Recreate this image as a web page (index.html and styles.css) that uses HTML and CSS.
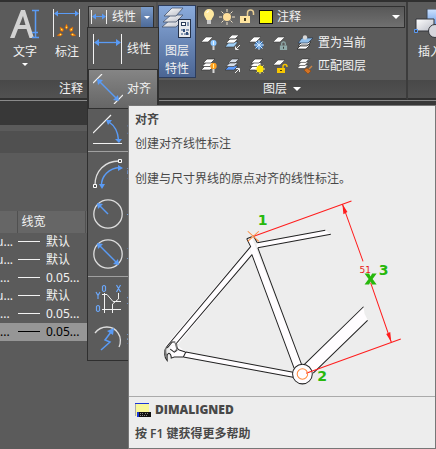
FILE: index.html
```html
<!DOCTYPE html>
<html lang="zh-CN">
<head>
<meta charset="utf-8">
<title>标注 - 对齐</title>
<link rel="stylesheet" href="styles.css">
</head>
<body>
<svg class="defs" aria-hidden="true">
  <defs>
    <linearGradient id="steel" x1="0" y1="0" x2="1" y2="1"><stop offset="0" stop-color="#fff"/><stop offset="1" stop-color="#b9bcc6"/></linearGradient>
    <linearGradient id="glass" x1="0" y1="0" x2="0" y2="1"><stop offset="0" stop-color="#cfe3ff"/><stop offset="1" stop-color="#6c9fe6"/></linearGradient>
    <symbol id="sheet" viewBox="0 0 16 16"><path d="M0 7L5 2h7L7 7z" fill="#fff" stroke="#3d3d3d" stroke-width=".6"/></symbol>
    <symbol id="stack" viewBox="0 0 16 16"><g fill="#fff" stroke="#333" stroke-width=".7"><path d="M0 12l4-4h9l-4 4z"/><path d="M1 8.500l4-4h8l-4 4z"/><path d="M2 5l4-4h8l-4 4z"/></g></symbol>
    <symbol id="padlock" viewBox="0 0 10 10"><path d="M3 5V3a2 2 0 0 1 4 0v2" fill="none" stroke="currentColor" stroke-width="1.400"/><path d="M1 5h8v5H1z" fill="currentColor"/><path d="M4.500 6.500h1v2h-1z" fill="#333"/></symbol>
  </defs>
</svg>

<header class="ribbon">
  <section class="panel panel-annotate">
    <div class="panel-body">
      <button class="big" type="button">
        <svg width="30" height="30" viewBox="0 0 30 30"><path d="M0 29L11 1h4l9 28h-4.500l-3-9H8l-3.500 9zM9.500 16h6L13 7z" fill="#d2d2d2"/><path d="M22 1.500h7M22 28.500h7M25.500 2v26M22 23.500h6" stroke="#5a9bf5" fill="none" stroke-width="1.500"/></svg>
        <span>文字</span><i class="caret"></i>
      </button>
      <button class="big" type="button">
        <svg width="28" height="30" viewBox="0 0 28 30"><path d="M.5 0v28M26.500 0v28" stroke="#eee"/><path d="M3 4.500h21" stroke="#5a9bf5"/><path d="M1 4.500l4-3v6zM26 4.500l-4-3v6z" fill="#5a9bf5"/><g fill="#ff9d13" stroke="#c95a0c" stroke-width=".5"><path d="M13.500 15l1.500 3.500-1.500 2-1.500-2zM7 18l3.500 2-.5 2.500-2.500-.5zM20 18l-3.500 2 .5 2.500 2.500-.5zM4 26.500l3.500-2.500 2 1.500-2 1.500zM23 26.500l-3.500-2.500-2 1.500 2 1.500z"/></g><path d="M13 18h1v1h-1zM8 20h1v1H8zM18 20h1v1h-1zM7 25h1v1H7zM19 25h1v1h-1z" fill="#ffec68"/></svg>
        <span>标注</span>
      </button>
      <div class="split">
        <button class="split-main" type="button">
          <svg width="17" height="16" viewBox="0 0 17 16"><path d="M.5 1v14M15.500 1v14" stroke="#eee"/><path d="M3 7.500h10" stroke="#5a9bf5"/><path d="M1 7.500l4-3v6zM15 7.500l-4-3v6z" fill="#5a9bf5"/></svg>
          <span>线性</span>
        </button>
        <button class="split-drop" type="button" aria-label="标注类型"><i class="caret small"></i></button>
      </div>
    </div>
    <h2 class="panel-title">注释<i class="caret wide"></i></h2>
  </section>

  <section class="panel panel-layers">
    <div class="panel-body">
      <button class="props" type="button">
        <svg width="32" height="34" viewBox="0 0 32 34"><g fill="url(#steel)" stroke="#47556e" stroke-width=".8"><path d="M1 21l8-7h13l-7 7z"/><path d="M2 16l8-7h12l-7 7z"/><path d="M3 10l8-8h11l-7 8z"/></g><rect x="17.500" y="13.500" width="12" height="18" fill="#e9ebee" stroke="#25324a"/><path d="M20 16h5v4h-5z" fill="#2b3d59"/><path d="M21 17h3v2h-3z" fill="#fff"/><path d="M26 17h2M26 19h2M20 24h2M20 28h2M25 24h3M23 28h5" stroke="#2b4a78"/><path d="M22 23h2v3h-2zM25 26h2v3h-2z" fill="#33507c"/></svg>
        <span>图层</span><span>特性</span>
      </button>
      <div class="layer-tools">
        <div class="layer-combo">
          <svg width="12" height="16" viewBox="0 0 12 16"><path d="M3.500 11C3 8.500 1 8 1 5a5 5 0 0 1 10 0c0 3-2 3.500-2.500 6z" fill="#ffe9a0"/><path d="M4 11h4v4H4z" fill="#c8c8c8"/><path d="M4 4a2 2 0 0 1 2-2" stroke="#fff" fill="none"/></svg>
          <svg width="16" height="16" viewBox="0 0 16 16"><circle cx="8" cy="8" r="4" fill="#ffdf9b"/><path d="M8 0v3M8 13v3M0 8h3M13 8h3M2.500 2.500l2 2M11.500 11.500l2 2M2.500 13.500l2-2M11.500 4.500l2-2" stroke="#eee1c8"/></svg>
          <svg width="16" height="16" viewBox="0 0 16 16"><path d="M8.500 7V4a2.500 2.500 0 0 1 6 0v2" fill="none" stroke="#e9cf94" stroke-width="1.500"/><path d="M1 7h10v7H1z" fill="#ffe5a0"/><path d="M5 9h2v3H5z" fill="#4b4020"/></svg>
          <i class="swatch"></i>
          <select aria-label="图层"><option>注释</option></select>
          <i class="caret wide"></i>
        </div>
        <div class="tool-row">
          <button type="button" aria-label="关闭图层"><svg width="16" height="16" viewBox="0 0 16 16"><use href="#sheet" width="16" height="16"/><circle cx="12.500" cy="8" r="3" fill="#8fc8ff"/><path d="M12.500 6v4" stroke="#eaf5ff"/><path d="M11.500 11h2v4h-2z" fill="#d0d0d0"/></svg></button>
          <button type="button" aria-label="隔离图层"><svg width="16" height="16" viewBox="0 0 16 16"><path d="M0 12l4-5h9l-4 5z" fill="#9fcff8" stroke="#333" stroke-width=".6"/><path d="M1 8l4-4h8L9 8zM3 4l4-4h7l-4 4z" fill="#fff" stroke="#333" stroke-width=".6"/><path d="M15 10l-4 4M10.500 11.500v3h3" stroke="#eee" fill="none"/></svg></button>
          <button type="button" aria-label="冻结图层"><svg width="16" height="16" viewBox="0 0 16 16"><use href="#sheet" width="16" height="16"/><circle cx="10" cy="10" r="4" fill="#3f7dc4"/><path d="M10 5v10M5 10h10M6.500 6.500l7 7M13.500 6.500l-7 7" stroke="#cfe8ff"/></svg></button>
          <button type="button" aria-label="锁定图层"><svg width="16" height="16" viewBox="0 0 16 16"><use href="#sheet" width="16" height="16"/><use href="#padlock" x="6" y="6" width="9" height="9" color="#8faaa9"/></svg></button>
          <button class="labelled" type="button"><svg width="16" height="16" viewBox="0 0 16 16"><path d="M0 14l4-4h9l-4 4zM1 11l4-4h9l-4 4z" fill="#fff" stroke="#222" stroke-width=".7"/><path d="M1 8l4-5h11l-5 5z" fill="#91bfea" stroke="#26384e" stroke-width=".7"/><circle cx="8" cy="2.500" r="2.200" fill="#d8d8d8"/></svg><span>置为当前</span></button>
        </div>
        <div class="tool-row">
          <button type="button" aria-label="打开所有图层"><svg width="16" height="16" viewBox="0 0 16 16"><use href="#stack" width="16" height="16"/><circle cx="12.500" cy="8" r="3.200" fill="#ff9f20"/><path d="M12.500 6v4" stroke="#fff29a"/><path d="M11.500 11h2v4h-2z" fill="#d8d8d8"/></svg></button>
          <button type="button" aria-label="取消隔离"><svg width="16" height="16" viewBox="0 0 16 16"><path d="M0 12l4-4h9l-4 4z" fill="#5b9bff" stroke="#333" stroke-width=".6"/><path d="M1 8.500l4-4h8l-4 4zM3 5l4-4h7l-4 4z" fill="#d7dee9" stroke="#333" stroke-width=".6"/><path d="M10 15l4-4M11 10.500h3.500v3.500" stroke="#eee" fill="none"/></svg></button>
          <button type="button" aria-label="解冻图层"><svg width="16" height="16" viewBox="0 0 16 16"><use href="#stack" width="16" height="16"/><path d="M11 6v10M6 11h10M7.500 7.500l7 7M14.500 7.500l-7 7" stroke="#fff08a"/><circle cx="11" cy="11" r="3.500" fill="#ffe600"/></svg></button>
          <button type="button" aria-label="解锁图层"><svg width="16" height="16" viewBox="0 0 16 16"><use href="#sheet" width="16" height="16"/><path d="M10 11V8.500a2 2 0 0 1 4 0V9" stroke="#f7c600" stroke-width="1.400" fill="none"/><path d="M4 10h8v5H4z" fill="#f7c600"/><path d="M7 12h2v1H7z" fill="#4a3a00"/></svg></button>
          <button class="labelled" type="button"><svg width="16" height="16" viewBox="0 0 16 16"><use href="#stack" width="14" height="14"/><path d="M7 12l3-2 4 3-3 3z" fill="#d27325" stroke="#8d430c" stroke-width=".6"/><path d="M12 11l3-3" stroke="#c98346" stroke-width="1.500"/></svg><span>匹配图层</span></button>
        </div>
      </div>
    </div>
    <h2 class="panel-title">图层<i class="caret wide"></i></h2>
  </section>

  <section class="panel panel-insert">
    <div class="panel-body">
      <button class="big insert" type="button">
        <svg width="32" height="30" viewBox="0 0 32 30"><path d="M13 0h18v16H13z" fill="url(#glass)" stroke="#3d4654"/><path d="M2 10h18v12H2z" fill="url(#steel)" stroke="#34373d"/><circle cx="21" cy="22" r="6.500" fill="#d6d6dc" stroke="#34373d"/><path d="M.5 20.500h3v3h-3z" fill="#444" stroke="#5a9bf5"/></svg>
        <span>插入</span>
      </button>
    </div>
    <h2 class="panel-title"></h2>
  </section>
</header>

<main class="palette">
  <div class="band"></div>
  <div class="toolbar"></div>
  <table class="layers">
    <thead><tr><th></th><th>线宽</th><th></th></tr></thead>
    <tbody>
      <tr><td class="named">u...</td><td><i class="weight"></i>默认</td><td></td></tr>
      <tr><td class="named">u...</td><td><i class="weight"></i>默认</td><td></td></tr>
      <tr><td>...</td><td><i class="weight"></i>0.05...</td><td></td></tr>
      <tr><td class="named">u...</td><td><i class="weight"></i>默认</td><td></td></tr>
      <tr><td>...</td><td><i class="weight"></i>0.05...</td><td></td></tr>
      <tr class="selected"><td>...</td><td><i class="weight"></i>0.05...</td><td></td></tr>
    </tbody>
  </table>
</main>

<nav class="menu" aria-label="标注类型">
  <button type="button"><svg width="30" height="30" viewBox="0 0 30 30"><path d="M.5 0v30M28.500 0v30" stroke="#f2f2f2"/><path d="M3 8.500h23" stroke="#5a9bf5" stroke-width="1.300"/><path d="M1 8.500l5-3.500v7zM28 8.500L23 5v7z" fill="#5a9bf5"/></svg><span>线性</span></button>
  <button type="button" class="active"><svg width="30" height="30" viewBox="0 0 30 30"><path d="M0 9l9-9M21 30l9-9" stroke="#f2f2f2" stroke-width="1.200"/><path d="M6 7l18 18" stroke="#5a9bf5" stroke-width="1.500"/><path d="M4 5l6 1-5 5zM26 27l-1-6-5 5z" fill="#5a9bf5"/></svg><span>对齐</span></button>
  <button type="button"><svg width="30" height="30" viewBox="0 0 30 30"><path d="M0 19L18 1M0 29.500h29" stroke="#f2f2f2" stroke-width="1.200"/><path d="M16 8c6 4 9 9 9.500 18" stroke="#5a9bf5" stroke-width="1.500" fill="none"/><path d="M13 6l6 0-4 5zM22 25h7l-3 4z" fill="#5a9bf5"/></svg><span>角度</span></button>
  <hr>
  <button type="button"><svg width="30" height="30" viewBox="0 0 30 30"><path d="M2 26C2 12 12 2 26 2" stroke="#dedede" stroke-width="1.300" fill="none"/><path d="M8.500 27C8 17 16 9 27 8.500" stroke="#5a9bf5" stroke-width="1.500" fill="none"/><path d="M6 25h6l-3 5zM25 6v6l5-3z" fill="#5a9bf5"/><path d="M.5 25.500h3v3h-3zM25.500.5h3v3h-3z" fill="#555" stroke="#fff"/></svg><span>弧长</span></button>
  <button type="button"><svg width="30" height="30" viewBox="0 0 30 30"><circle cx="15" cy="15" r="14.200" fill="none" stroke="#dedede" stroke-width="1.300"/><path d="M15 15L7 7" stroke="#5a9bf5" stroke-width="1.500"/><path d="M4 4l6 1-5 5z" fill="#5a9bf5"/></svg><span>半径</span></button>
  <button type="button"><svg width="30" height="30" viewBox="0 0 30 30"><circle cx="15" cy="15" r="14.200" fill="none" stroke="#dedede" stroke-width="1.300"/><path d="M7 7l16 16" stroke="#5a9bf5" stroke-width="1.500"/><path d="M4 4l6 1-5 5zM26 26l-1-6-5 5z" fill="#5a9bf5"/></svg><span>直径</span></button>
  <hr>
  <button type="button"><svg width="30" height="30" viewBox="0 0 30 30"><path d="M11.500 9v20M9 10.500h5l6 7h8M9 25.500h19M19.500 29v-9l6-5V9" stroke="#f2f2f2" fill="none"/><path d="M9.500 2.500q1.500-2 3 0v4q-1.500 2-3 0zM23.500 1l4 7M27.500 1l-4 7M3 8l2 3.500L7 8M5 11.500V15M3.500 22.500q1.500-2 3 0v4q-1.500 2-3 0z" stroke="#6ba6f7" stroke-width="1.200" fill="none"/></svg><span>坐标</span></button>
  <button type="button"><svg width="30" height="30" viewBox="0 0 30 30"><path d="M2 9C8 1 20 1 25 9c3 4 3 10 1 14" stroke="#dedede" stroke-width="1.300" fill="none"/><path d="M8 26l9-8-5-2 6-8" stroke="#5a9bf5" stroke-width="1.500" fill="none"/><path d="M21 4l-7 3 6 4z" fill="#5a9bf5"/></svg><span>折弯</span></button>
</nav>

<aside class="tooltip" role="tooltip">
  <div class="tip-main">
    <h3>对齐</h3>
    <p class="summary">创建对齐线性标注</p>
    <p class="detail">创建与尺寸界线的原点对齐的线性标注。</p>
    <svg class="figure" viewBox="136 194 292 196" role="img" aria-label="自行车车架标注示例">
      <g fill="#fffdff">
        <path d="M257 243l68-13 5 4-73 14zM250 246l-84 99 12-1 74-89zM186 351l107 20v5l-109-20zM304 364l59-58 1 7 3 6-54 53zM248 240l4-3 50 127-8 3-43-114z"/>
        <path d="M171 345l7-1 8 7-2 5-12 1z"/>
        <circle cx="302.300" cy="372.800" r="9.800"/>
      </g>
      <g fill="none" stroke="#222" stroke-width="1">
        <path d="M257.500 242.500L325 230M258 247.500L330.500 234"/>
        <path d="M251 246l-83 99M252 254.500l-75 88"/>
        <path d="M252 254l42 113M258 247.500L301.500 363.500M257.500 242.500l-4-7M247 238.500l5-2M247 238.500l4 8"/>
        <path d="M186.500 351L293 371M184 356l109 20M186.500 351l-2.500 5"/>
        <path d="M304 363.500l59-57.500M313 372l54-52.500"/>
        <path d="M168 345c-4 5-3 11 0 14.500V354c1-3 4-2 4 3l3-1 9 0M168 347l5-6 3 0M177 342c0 4 1 6 3 7l6 2M171 348l4 3 3-2"/>
        <circle cx="302.300" cy="372.800" r="9.800"/>
      </g>
      <path d="M166 347c-2 5 0 9 2.500 12v-4c-1-2-2-4-1-9zM175 341l2 7-3 3 4-2v-6z" fill="#777"/>
      <g stroke="#ff1d1d" fill="none"><path d="M254 236l97-35M342 204l20.500 57M370 282l20.500 59M306 372l94-34"/></g>
      <path d="M342 204l5 8-4 2zM390.500 341l-5-8 4-2z" fill="#ff1d1d"/>
      <g stroke="#ff8b3d" fill="none"><path d="M248 231l11 10M259 231l-11 10"/><circle cx="302.300" cy="372.800" r="5.200"/></g>
      <path d="M364 273h4.500l1.500 3 1.500-3h4.500l-4 5.500 4 5.500h-4.500l-1.500-3-1.500 3H364l4-5.500z" fill="#27b80c"/>
      <g class="marks"><text x="258" y="225">1</text><text x="317" y="380">2</text><text x="378" y="274">3</text></g>
      <text class="dim" x="359" y="272">51</text>
    </svg>
  </div>
  <footer>
    <div class="command"><svg width="16" height="16" viewBox="0 0 16 16"><path d="M0 1h14v13H0z" fill="#f8f79a"/><path d="M.5 14V1" stroke="#aaa"/><path d="M0 1h14v1H0z" fill="#1a35d8"/><path d="M2 10h14v5H2z" fill="#111"/><path d="M2 10h2v5H2z" fill="#1a35d8"/><path d="M5 11.500h4M10 11.500h4M5 13.500h7" stroke="#888" stroke-dasharray="1 1"/></svg><b>DIMALIGNED</b></div>
    <p>按 F1 键获得更多帮助</p>
  </footer>
</aside>
</body>
</html>
```
FILE: styles.css
```css
* { box-sizing: border-box; }

body {
  margin: 0;
  min-height: 100vh;
  display: flex;
  flex-direction: column;
  position: relative;
  overflow: hidden;
  background: #5b5b5b;
  color: #f2f2f2;
  font: 12px/18px "Noto Sans", "Noto Sans CJK SC", sans-serif;
}

svg { display: block; flex: none; }
.defs { position: absolute; width: 0; height: 0; }

button {
  margin: 0;
  padding: 0;
  border: 0;
  background: none;
  color: inherit;
  font: inherit;
}

.caret {
  width: 0;
  height: 0;
  border: 3px solid transparent;
  border-top-color: #fff;
  border-bottom: 0;
}
.caret.wide { border-width: 4px 4px 0; }

/* Ribbon */
.ribbon {
  display: flex;
  border-top: 2px solid #303030;
  border-bottom: 1px solid #8a8a8a;
}
.panel {
  display: flex;
  flex-direction: column;
  flex: none;
  border-right: 2px solid #3c3c3c;
  border-bottom: 2px solid #303030;
}
.panel-annotate { width: 158px; border-right-color: #505050; }
.panel-layers { width: 250px; }
.panel-insert { flex: 1; min-width: 0; overflow: hidden; border-right: 0; }
.panel-body { display: flex; height: 78px; }
.panel-title {
  display: flex;
  align-items: center;
  justify-content: center;
  gap: 6px;
  height: 18px;
  margin: 0;
  background: linear-gradient(#484848, #515151);
  font: inherit;
}
.panel-annotate .panel-body { padding-left: 4px; }

.big {
  display: flex;
  flex: none;
  flex-direction: column;
  align-items: center;
  width: 42px;
  padding-top: 7px;
}
.big span { margin-top: 4px; }
.big .caret { margin-top: 2px; }
.big.insert { width: 44px; padding-left: 0; }

.split {
  display: flex;
  width: 66px;
  height: 22px;
  margin-top: 4px;
  border: 1px solid #303030;
}
.split-main {
  display: flex;
  flex: 1;
  align-items: center;
  gap: 4px;
  padding-left: 2px;
  background: linear-gradient(#808080, #646464);
}
.split-drop {
  display: flex;
  align-items: center;
  justify-content: center;
  width: 12px;
  background: linear-gradient(#7c9dcb, #4d6a98);
}

.props {
  display: flex;
  flex-direction: column;
  align-items: center;
  width: 38px;
  height: 73px;
  margin-top: 3px;
  border: 1px solid #2c3c5c;
  background: linear-gradient(#8aabdc, #4b6593);
}
.props svg { margin-bottom: 2px; }

.layer-tools { flex: 1; padding: 4px 1px 0 1px; }
.layer-combo {
  display: flex;
  align-items: center;
  gap: 4px;
  height: 22px;
  padding: 0 4px 0 5px;
  border: 1px solid #303030;
  background: linear-gradient(#585858, #707070);
}
.swatch {
  width: 14px;
  height: 14px;
  border: 1px solid #111;
  background: #ffff00;
}
.layer-combo select {
  flex: 1;
  min-width: 0;
  height: 18px;
  padding: 0;
  border: 0;
  background: none;
  color: inherit;
  font: inherit;
  appearance: none;
}
.tool-row {
  display: flex;
  align-items: center;
  gap: 8px;
  height: 16px;
  margin: 7px 0 0 4px;
}
.labelled {
  display: flex;
  align-items: center;
  gap: 5px;
  white-space: nowrap;
}

/* Layer palette */
.band { height: 24px; background: #383838; }
.toolbar {
  height: 22px;
  margin-top: 6px;
  background: #505050;
}
.layers {
  width: 100%;
  margin-top: 58px;
  border-collapse: collapse;
  table-layout: fixed;
}
.layers th,
.layers td {
  height: 18px;
  padding: 0;
  white-space: nowrap;
  font-weight: 400;
  text-align: left;
}
.layers th {
  height: 22px;
  padding-left: 4px;
  border-right: 1px solid #505050;
  background: #666;
}
.layers th:nth-child(1) { width: 17px; }
.layers th:nth-child(2) { width: 68px; }
.layers .named { text-indent: -4px; }
.weight {
  display: inline-block;
  width: 22px;
  height: 1px;
  margin: 0 6px 0 1px;
  background: currentColor;
  vertical-align: 4px;
}
.selected { background: #969696; color: #000; }

/* Drop-down menu */
.menu {
  position: absolute;
  top: 27px;
  left: 87px;
  width: 72px;
  padding: 1px 0;
  border: 1px solid #2f2f2f;
  background: #5b5b5b;
}
.menu button {
  display: flex;
  align-items: center;
  gap: 4px;
  width: 100%;
  height: 40px;
  padding-left: 4px;
  border: 1px solid transparent;
  white-space: nowrap;
}
.menu .active {
  border-color: #303030;
  background: linear-gradient(#858585, #666);
}
.menu hr {
  height: 1px;
  margin: 2px 0;
  border: 0;
  background: #a0a0a0;
}

/* Extended tooltip */
.tooltip {
  position: absolute;
  top: 105px;
  right: 0;
  bottom: 0;
  left: 128px;
  display: flex;
  flex-direction: column;
  border: 1px solid #777;
  background: #ededed;
  color: #484848;
}
.tip-main { padding: 5px 6px; }
.tooltip h3,
.tooltip p { margin: 0; font-size: 12px; line-height: 18px; }
.tooltip .summary { margin-top: 6px; }
.tooltip .detail { margin-top: 17px; }
.figure { width: 100%; margin-top: 6px; }
.marks { fill: #27b80c; font: bold 14px "DejaVu Sans", sans-serif; }
.dim { fill: #e81c1c; font: 9px "DejaVu Sans", sans-serif; }
.tooltip footer {
  flex: 1;
  padding: 4px 6px;
  border-top: 1px solid #aaa;
  font-weight: 600;
}
.command { display: flex; align-items: center; gap: 4px; }
.command b { font-family: "Open Sans", sans-serif; }
.tooltip footer p { margin-top: 6px; }
```
